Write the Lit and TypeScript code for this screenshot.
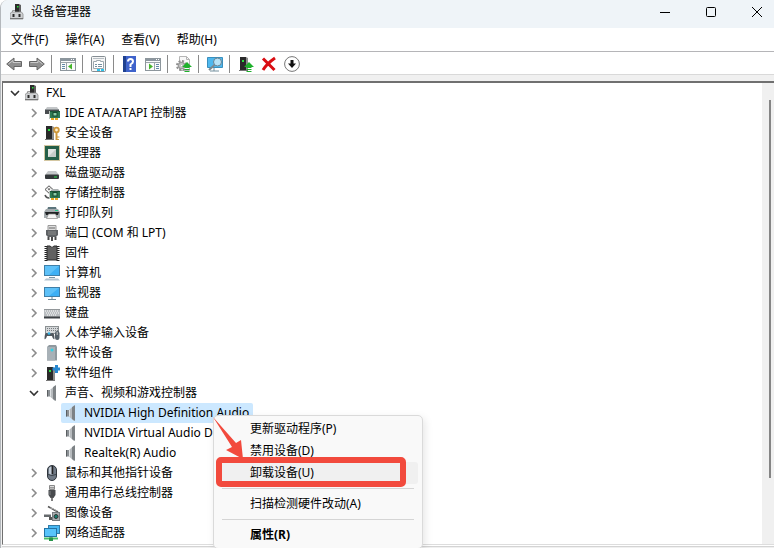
import { LitElement, html, svg, css, nothing, SVGTemplateResult } from "lit";
import { customElement, property } from "lit/decorators.js";

const chip = svg`<path d="M5.500 6v8" stroke="#b9c4bd"/><rect x="6" y="6" width="10" height="7" fill="#2f7a52"/><rect x="9" y="7.500" width="4" height="3.500" fill="#8fd0a8" stroke="#174a30"/><path d="M6 6.500h10" stroke="#1d5537"/><path d="M7 14h7" stroke="#e8a723" stroke-width="2" stroke-dasharray="3 1"/>`;
const tower = svg`<path d="M2 1h6v13H2z" fill="#2a2a2a"/><path d="M8 1l2 1v12H8z" fill="#8c8c8c"/><path d="M1 14.500h9" stroke="#777"/><path d="M4 4h2v2H4z" fill="#29e03f"/>`;
const greenArrow = svg`<path d="M11 6l5 5h-2.500v1h-5v-1H6z" fill="#1fb12c"/><path d="M8.500 13.500h5M8.500 15.500h5" stroke="#1fb12c"/>`;
const gear = svg`<circle cx="5.500" cy="9.500" r="4.500" fill="none" stroke="#8f8f8f" stroke-width="2" stroke-dasharray="2 1.530"/><circle cx="5.500" cy="9.500" r="3" fill="#e2e2e2" stroke="#9b9b9b" stroke-width="1.500"/><circle cx="5.500" cy="9.500" r="1.200" fill="#fff" stroke="#888" stroke-width=".6"/>`;

const icons: Record<string, SVGTemplateResult> = {
  root: svg`<path d="M5 0h4v8H5z" fill="#2c2c2c"/><path d="M9 0l2 1v7H9z" fill="#5f5f5f"/><path d="M7 2h1.500v1.500H7z" fill="#27df3b"/><path d="M2.500 9V6.500H5" stroke="#999" fill="none"/><path d="M1.500 8h10L13 10v5H0v-5z" fill="#d0d2d4" stroke="#8d8d8d" stroke-width=".8"/><path d="M0 14.500h13" stroke="#777"/><path d="M2.500 10h2v3h-2zM8.500 10h2v3h-2z" fill="#2c2c2c"/>`,
  ide: svg`<path d="M3 2h10l2 3H1z" fill="#c4c7c9"/><path d="M1 4.500h14V9H1z" fill="#4a4d50"/><path d="M1 4.500h14" stroke="#8f9497"/>${chip}`,
  security: svg`${tower}<circle cx="12.500" cy="5" r="2.300" fill="#fff3d4" stroke="#cf973a" stroke-width="1.800"/><path d="M12.500 8v7" stroke="#cf973a" stroke-width="2"/><path d="M13 12h2.500M13 14.500h2" stroke="#cf973a"/>`,
  cpu: svg`<rect x=".5" y=".5" width="15" height="15" fill="none" stroke="#a88f45" stroke-dasharray="1 1"/><rect x="1" y="1" width="14" height="14" fill="#255f48"/><rect x="4" y="4" width="8" height="8" fill="#e2e5e3"/><path d="M12 4v8H4z" fill="#c6ccc8"/>`,
  disk: svg`<path d="M4 6h8l3 4H1z" fill="#c5c8ca"/><rect x="1" y="9.500" width="14" height="4.500" rx="1" fill="#34383a"/><path d="M10 12h3" stroke="#2bd94c"/>`,
  storage: svg`<path d="M5 .8l4 3.700-4 3.700L1 4.500z" fill="#f4f4f4" stroke="#555"/><path d="M3.500 3.500h3L5 5.500z" fill="#555"/><path d="M1 10q1 3 4 3" stroke="#555" stroke-width="1.500" fill="none"/><path d="M8 4h6l2 2H7z" fill="#aeb2b3"/>${chip}`,
  printer: svg`<path d="M4 2h8l1 3H3z" fill="#5d757c"/><path d="M2 4h12l2 3v6H0V7z" fill="#a4abae"/><path d="M1 7h14l-1 3H2z" fill="#1f2224"/><path d="M4.500 9h7l2 4.500h-11z" fill="#f4f4f4" stroke="#888" stroke-width=".7"/><path d="M11 5.500h3" stroke="#24c58b"/>`,
  port: svg`<path d="M4 .5h8v5H4z" fill="#dedede" stroke="#999"/><path d="M6 2v2M8 2v2M10 2v2" stroke="#666"/><path d="M2 5h12v5l-2 2H4l-2-2z" fill="#5f6265"/><path d="M4 7h8M4 9h8" stroke="#8d8d8d"/><path d="M4.500 12v3M8 12v4M11.500 12v3" stroke="#4a4a4a" stroke-width="2"/>`,
  firmware: svg`<path d="M2 1v15M14 1v15" stroke="#222" stroke-width="3" stroke-dasharray="1 1"/><path d="M3 1h3q2 3 4 0h3v14H3z" fill="#606060" stroke="#2a2a2a"/>`,
  computer: svg`<rect x=".5" y=".5" width="15" height="10" fill="#3db0f5" stroke="#3f7fa8"/><path d="M1 1h14L5 10H1z" fill="#7fd2fc" opacity=".5"/><path d="M5 12.500h6" stroke="#7793a3"/><path d="M2 13.500h12l2 2H0z" fill="#b4c4d0"/>`,
  monitor: svg`<rect x=".5" y="2.500" width="15" height="9" fill="#3db0f5" stroke="#3f7fa8"/><path d="M1 3h14L5 11H1z" fill="#7fd2fc" opacity=".5"/><path d="M8 12v2M4 14.500h8" stroke="#6d8998"/>`,
  keyboard: svg`<rect x="0" y="4" width="16" height="8" fill="#b9bdc0"/><path d="M1 6h14M2 8h13M3 10h10" stroke="#fff" stroke-dasharray="1 1"/><path d="M0 4.500h16" stroke="#92979a"/><path d="M0 12.500h16" stroke="#3d4145" stroke-width="2"/>`,
  hid: svg`<rect x="1.500" y="1.500" width="13" height="7" fill="#d5d8da" stroke="#8c9193"/><path d="M3 3.500h11M3 5.500h11" stroke="#777c80" stroke-dasharray="1 1"/><path d="M.5 14q0-7 2.500-6 3 1 5 0 2.500-1 2.500 6-1.500 1-2.500-3h-5q-1 4-2.500 3z" fill="#4f565d"/><circle cx="5" cy="8.500" r="1.300" fill="#33b5e9"/><rect x="11" y="6" width="4.500" height="9" rx="2.200" fill="#56616a"/><path d="M13.200 7v3" stroke="#ccc"/>`,
  software: svg`<path d="M3 2l2-2h7l1 2v13.500H3z" fill="#8f999f"/><path d="M3 2h8v13.500H3z" fill="#a8b1b7"/><circle cx="8" cy="5" r="1.500" fill="#31d3e8"/>`,
  component: svg`<g transform="translate(1 1)">${tower}</g><path d="M12.500 0v8M8.500 4h7.500" stroke="#2687cf" stroke-width="3"/>`,
  sound: svg`<path d="M3 5h3v6.500H3z" fill="#8b9094"/><path d="M3.500 5v6.500" stroke="#5b5f62"/><path d="M6 5l5-4.500v15.500L6 11.500z" fill="#b7bbbe"/><path d="M9 2.300L12 0v16l-3-2z" fill="#7d8285"/><path d="M6.500 5v6.500" stroke="#dfe2e4"/>`,
  mouse: svg`<rect x="3.500" y=".5" width="9" height="15" rx="4.500" fill="#707a86" stroke="#30363d"/><path d="M5 3q2-2 2.500-1v8Q5 10 5 8z" fill="#c3ccd6"/><path d="M8.500 1v8" stroke="#222" stroke-width="1.500"/><path d="M4 9.500q4 2 8 0" stroke="#3b4249" fill="none"/>`,
  usb: svg`<path d="M5.500.5h5v4h-5z" fill="#ddd" stroke="#888"/><path d="M7 2v1.500M9 2v1.500" stroke="#555"/><path d="M4.500 5h7v5l-2 3h-3l-2-3z" fill="#484b4e"/><path d="M6 6v4" stroke="#7b7e80"/><path d="M8 12v4" stroke="#555" stroke-width="1.500"/>`,
  imaging: svg`<path d="M4 1.500l10 5.500" stroke="#555" stroke-width="1.500"/><path d="M6 3q3 0 7 3" stroke="#aaa" fill="none"/><path d="M0 9.500h7V12H0z" fill="#65696c"/><path d="M5 12h4v3H5z" fill="#555"/><rect x="8.500" y="7.500" width="7" height="8" fill="#a9aeb0" stroke="#777c7f"/><circle cx="12" cy="11.500" r="2" fill="#147a6d" stroke="#333"/>`,
  network: svg`<rect x="4.500" y=".5" width="11" height="8" fill="#47b8f3" stroke="#337da7"/><rect x=".5" y="3.500" width="12" height="8" fill="#58c4fb" stroke="#2474a5"/><path d="M7 12v2" stroke="#777"/><path d="M0 13.500h14" stroke="#49c06a" stroke-width="2"/><path d="M5 12.500h4V16H5z" fill="#27964a"/>`,
  back: svg`<path d="M.7 8L8 2v3.500h7.500v5H8V14z" fill="#8f8f8f" stroke="#666"/><path d="M2.500 8L7 4.500v2h7.500" fill="none" stroke="#c9c9c9"/>`,
  forward: svg`<path d="M15.300 8L8 2v3.500H.5v5H8V14z" fill="#8f8f8f" stroke="#666"/><path d="M1.500 6.500H9v-2L13.500 8" fill="none" stroke="#c9c9c9"/>`,
  consoleTree: svg`<rect x=".5" y="2.500" width="15" height="12" fill="#fafbfb" stroke="#8d969c"/><path d="M1 4h14" stroke="#8b969f" stroke-width="2"/><path d="M1 6.500h14M6.500 7v7" stroke="#9ca4aa"/><path d="M2 8.500h3M2 10.500h3M2 12.500h3" stroke="#6288a7"/><path d="M12 7.500v6L8 10.500z" fill="#45b52b"/><path d="M11 3.500h1M13 3.500h1" stroke="#fff"/>`,
  properties: svg`<rect x=".5" y=".5" width="14" height="15" rx="1" fill="#f5f5f5" stroke="#858d93"/><path d="M2 2.500h11" stroke="#b7bec3"/><path d="M2.500 5.500h3v-1h4v1h3v7h-10z" fill="#fff" stroke="#9da8af"/><path d="M4 8.500h2M4 10.500h2M7 8.500h4M7 10.500h4" stroke="#778fa0"/><path d="M6 14h3M10 14h3" stroke="#2cc6ef" stroke-width="2"/>`,
  help: svg`<rect x="1" y="0" width="13" height="16" fill="#3f63cb"/><path d="M2.500 0v16" stroke="#1f418f" stroke-width="3"/><path d="M6 5.500Q6 3 8.500 3T11 5.500Q11 7 8.500 8.500V11M7.500 13h2" fill="none" stroke="#fff" stroke-width="2"/>`,
  actionPane: svg`<rect x=".5" y="2.500" width="15" height="12" fill="#fafbfb" stroke="#8d969c"/><path d="M1 4h14" stroke="#8b969f" stroke-width="2"/><path d="M1 6.500h14M9.500 7v7" stroke="#9ca4aa"/><path d="M11 8.500h3M11 10.500h3M11 12.500h3" stroke="#6288a7"/><path d="M4 7.500v6l4-3z" fill="#45b52b"/><path d="M11 3.500h1M13 3.500h1" stroke="#fff"/>`,
  update: svg`<path d="M3.500.5h7l3 3v11h-10z" fill="#f8f8f8" stroke="#b5b5b5"/><path d="M10.500.5v3h3" fill="none" stroke="#b5b5b5"/>${gear}${greenArrow}`,
  scan: svg`<path d="M.5 1.500h15v10H.5z" fill="#4eb8ef" stroke="#3a8fbd"/><path d="M3 15h9M7 12v3" stroke="#75909e"/><circle cx="10.500" cy="6" r="4" fill="#b6e2f7" stroke="#6a8290"/><path d="M7.500 9L2 14" stroke="#7c8990" stroke-width="2"/>`,
  enable: svg`${tower}${greenArrow}`,
  uninstall: svg`<path d="M2 2.500q5 5 11.500 11.500M14 2Q6 7.500 2 14" fill="none" stroke="#d90d12" stroke-width="3"/>`,
  disable: svg`<circle cx="8" cy="8" r="7.400" fill="#fff" stroke="#777"/><path d="M8 4v4" stroke="#111" stroke-width="3"/><path d="M4 7.500h8L8 12z" fill="#111"/>`,
};

const glyph = (name: string) => html`<svg width="16" height="16" viewBox="0 0 16 16" aria-hidden="true">${icons[name]}</svg>`;

interface Device { label: string; icon: string; open?: boolean; selected?: boolean; children?: Device[] }

const computer: Device = {
  label: "FXL", icon: "root", open: true, children: [
    { label: "IDE ATA/ATAPI 控制器", icon: "ide", children: [] },
    { label: "安全设备", icon: "security", children: [] },
    { label: "处理器", icon: "cpu", children: [] },
    { label: "磁盘驱动器", icon: "disk", children: [] },
    { label: "存储控制器", icon: "storage", children: [] },
    { label: "打印队列", icon: "printer", children: [] },
    { label: "端口 (COM 和 LPT)", icon: "port", children: [] },
    { label: "固件", icon: "firmware", children: [] },
    { label: "计算机", icon: "computer", children: [] },
    { label: "监视器", icon: "monitor", children: [] },
    { label: "键盘", icon: "keyboard", children: [] },
    { label: "人体学输入设备", icon: "hid", children: [] },
    { label: "软件设备", icon: "software", children: [] },
    { label: "软件组件", icon: "component", children: [] },
    { label: "声音、视频和游戏控制器", icon: "sound", open: true, children: [
      { label: "NVIDIA High Definition Audio", icon: "sound", selected: true },
      { label: "NVIDIA Virtual Audio Device", icon: "sound" },
      { label: "Realtek(R) Audio", icon: "sound" },
    ] },
    { label: "鼠标和其他指针设备", icon: "mouse", children: [] },
    { label: "通用串行总线控制器", icon: "usb", children: [] },
    { label: "图像设备", icon: "imaging", children: [] },
    { label: "网络适配器", icon: "network", children: [] },
  ],
};

@customElement("device-tree")
class DeviceTree extends LitElement {
  @property({ attribute: false }) root?: Device;

  static styles = css`
    :host { display: block; font-kerning: none; }
    ul { list-style: none; margin: 0; padding: 0; }
    ul ul { padding-left: 19px; }
    .tree { padding-left: 1px; }
    .row { display: flex; align-items: center; height: 20px; }
    .toggle { width: 21px; height: 20px; padding: 0; border: 0; background: none; display: grid; place-items: center; flex: none; }
    .spacer { width: 19px; flex: none; }
    .item { display: flex; align-items: center; gap: 5px; height: 20px; padding-right: 4px; white-space: nowrap; }
    .leaf { padding-left: 2px; }
    .selected { background: #cce8ff; border-radius: 2px; }
    svg { flex: none; display: block; }
  `;

  private node(d: Device): unknown {
    const chevron = d.open
      ? svg`<path d="M1 3l4 4 4-4" fill="none" stroke="#333" stroke-width="1.600"/>`
      : svg`<path d="M3 1l4 4-4 4" fill="none" stroke="#8c8c8c" stroke-width="1.600"/>`;
    return html`<li role="treeitem" aria-expanded=${d.children ? String(!!d.open) : nothing}>
      <div class="row">
        ${d.children
          ? html`<button class="toggle" aria-label=${d.label}><svg width="10" height="10" viewBox="0 0 10 10">${chevron}</svg></button>`
          : html`<span class="spacer"></span>`}
        <span class="item ${d.children ? "" : "leaf"} ${d.selected ? "selected" : ""}">${glyph(d.icon)}<span>${d.label}</span></span>
      </div>
      ${d.children?.length ? html`<ul role="group">${d.children.map((c) => this.node(c))}</ul>` : nothing}
    </li>`;
  }

  render() {
    return html`<ul class="tree" role="tree">${this.root ? this.node(this.root) : nothing}</ul>`;
  }
}

@customElement("app-root")
class AppRoot extends LitElement {
  static styles = css`
    :host {
      display: flex; flex-direction: column; position: relative; box-sizing: border-box;
      min-height: 100vh; overflow: hidden; background: #f0f0f0; color: #000;
      border-left: 1px solid #b4b8bc; border-top-left-radius: 8px;
      font: 12px/20px "Noto Sans", "Noto Sans CJK SC", sans-serif;
    }
    button { font: inherit; color: inherit; border: 0; background: none; padding: 0; }
    svg { display: block; }
    .title { display: flex; align-items: center; height: 28px; padding-left: 9px; background: #eff4f8; }
    .name { flex: 1; font: inherit; margin: 0 0 0 5px; padding-bottom: 4px; }
    .mark { padding-bottom: 4px; }
    .caption { width: 46px; height: 24px; display: grid; place-items: center; margin-bottom: 4px; }
    .caption:last-child { width: 34px; margin-left: 6px; }
    .menubar { display: flex; gap: 17px; height: 23px; padding-left: 10px; background: #fff; border-bottom: 1px solid #b5b5b8; align-items: center; }
    .tools { display: flex; align-items: center; height: 20px; padding-top: 2px; background: #fff; border-bottom: 1px solid #d9d9d9; margin-bottom: 6px; }
    .group { display: flex; gap: 7px; padding: 1px 6px 1px 8px; border-right: 1px solid #8a8a8a; }
    .group:first-child { padding-left: 5px; }
    .group:last-child { border-right: 0; }
    .body { display: flex; flex: 1; margin: 0 0 3px 1px; border: 1px solid #ddd; border-top: 2px solid #707070; border-left-color: #707070; border-right: 0; background: #fff; box-shadow: 0 1px #fff, 0 2px #d4d4d4; }
    device-tree { flex: 1; }
    .scroll { width: 12px; background: #f0f0f0; padding: 17px 3px 0 0; box-sizing: border-box; display: flex; justify-content: flex-end; }
    .thumb { width: 2px; height: 378px; background: #858585; }
    .popup {
      position: absolute; left: 212px; top: 415px; width: 210px; box-sizing: border-box;
      padding: 2px 4px; background: #f9f9f9; border: 1px solid #dadada; border-radius: 5px;
      box-shadow: 2px 3px 8px rgba(0, 0, 0, .1);
    }
    .entry { display: block; width: 100%; height: 22px; padding-left: 32px; text-align: left; border-radius: 3px; }
    .hover { background: #f0f0f0; }
    .strong { font-weight: 700; }
    hr { border: 0; height: 1px; background: #d5d5d5; margin: 4px; }
    .frame { position: absolute; left: 215px; top: 457px; width: 190px; height: 30px; box-sizing: border-box; border: 6px solid #f24a3d; border-radius: 5px; pointer-events: none; }
    .pointer { position: absolute; left: 211px; top: 417px; pointer-events: none; }
  `;

  private groups: [string, string][][] = [
    [["back", "后退"], ["forward", "前进"]],
    [["consoleTree", "显示/隐藏控制台树"]],
    [["properties", "属性"]],
    [["help", "帮助"], ["actionPane", "显示/隐藏操作窗格"]],
    [["update", "更新驱动程序"]],
    [["scan", "扫描检测硬件改动"]],
    [["enable", "启用设备"], ["uninstall", "卸载设备"], ["disable", "禁用设备"]],
  ];

  render() {
    return html`
      <header class="title">
        <span class="mark">${glyph("root")}</span>
        <h1 class="name">设备管理器</h1>
        <button class="caption" aria-label="最小化"><svg width="10" height="10"><path d="M0 5.500h10" stroke="#000"/></svg></button>
        <button class="caption" aria-label="最大化"><svg width="10" height="10"><rect x=".5" y=".5" width="9" height="9" rx="1" fill="none" stroke="#000"/></svg></button>
        <button class="caption" aria-label="关闭"><svg width="10" height="10"><path d="M0 0l10 10M10 0L0 10" stroke="#000"/></svg></button>
      </header>
      <nav class="menubar">
        ${["文件(F)", "操作(A)", "查看(V)", "帮助(H)"].map((m) => html`<button>${m}</button>`)}
      </nav>
      <div class="tools" role="toolbar">
        ${this.groups.map((g) => html`<div class="group">${g.map(([icon, label]) => html`<button aria-label=${label}>${glyph(icon)}</button>`)}</div>`)}
      </div>
      <main class="body">
        <device-tree .root=${computer}></device-tree>
        <div class="scroll"><div class="thumb"></div></div>
      </main>
      <div class="popup" role="menu">
        <button class="entry" role="menuitem">更新驱动程序(P)</button>
        <button class="entry" role="menuitem">禁用设备(D)</button>
        <button class="entry hover" role="menuitem">卸载设备(U)</button>
        <hr>
        <button class="entry" role="menuitem">扫描检测硬件改动(A)</button>
        <hr>
        <button class="entry strong" role="menuitem">属性(R)</button>
      </div>
      <div class="frame"></div>
      <svg class="pointer" width="34" height="43" viewBox="0 0 34 43" aria-hidden="true"><path d="M1 0L24 26l5-3 2 19-17-9 6-3z" fill="#f24a3d"/></svg>
    `;
  }
}
